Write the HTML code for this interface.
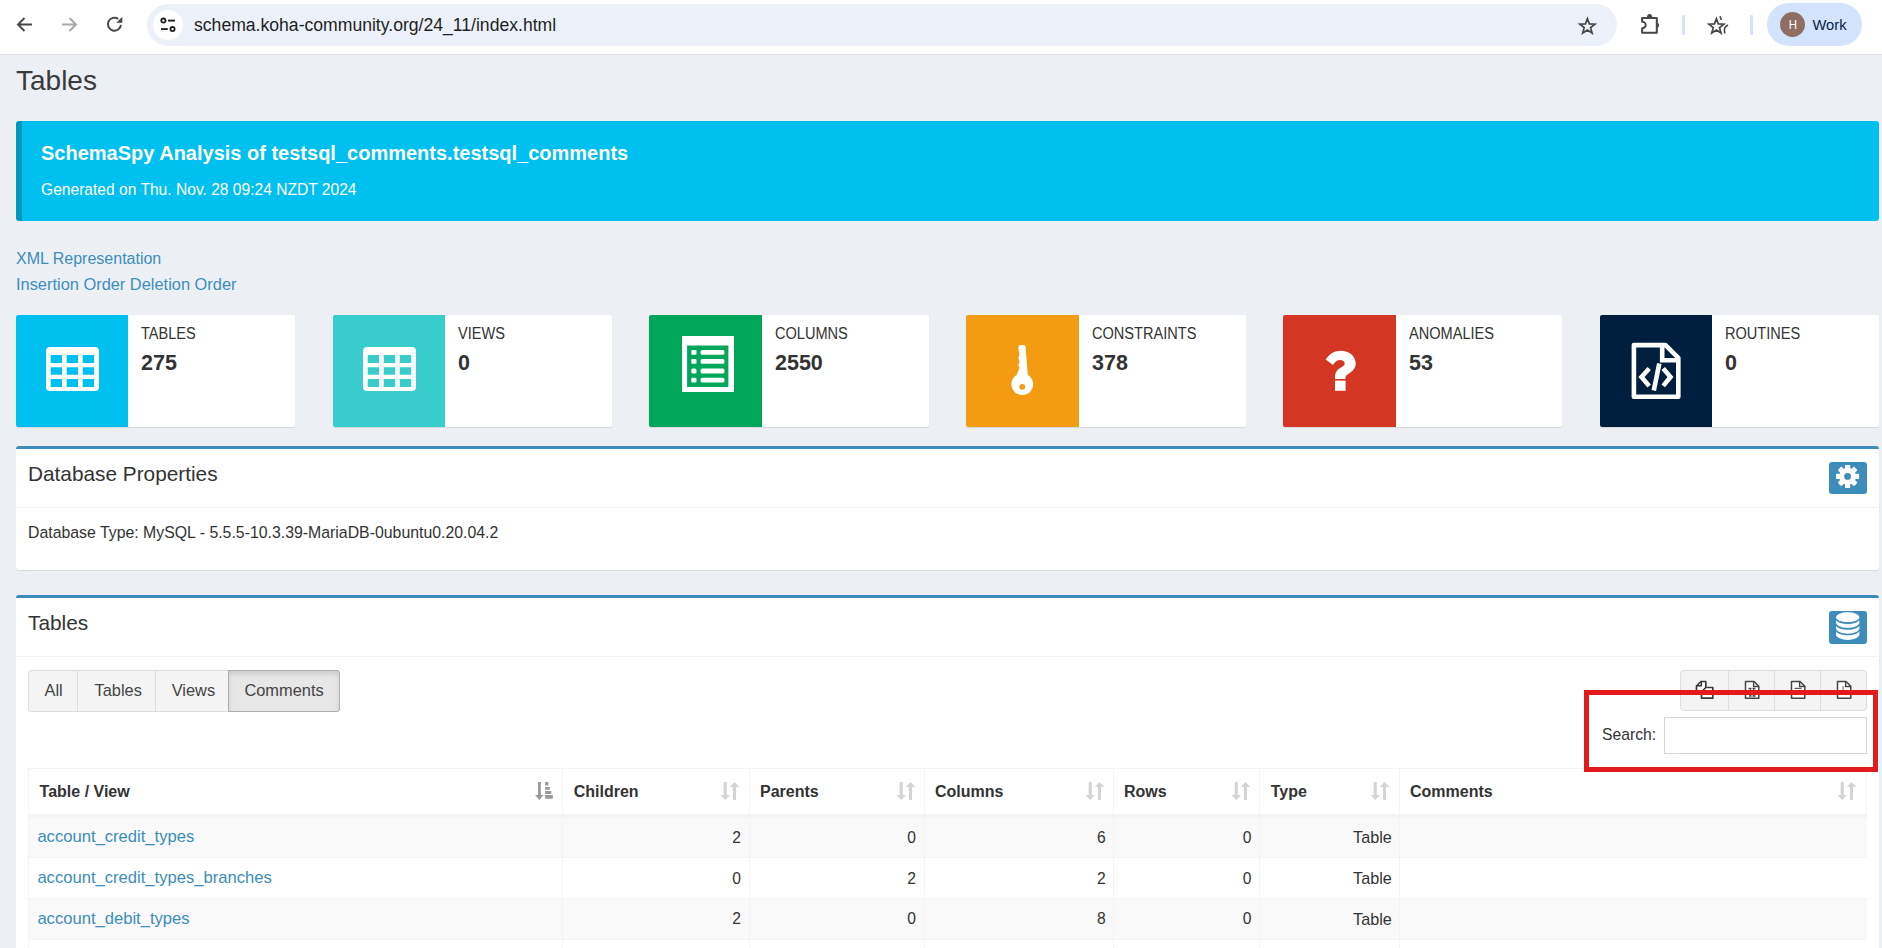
<!DOCTYPE html>
<html><head><meta charset="utf-8">
<style>
*{box-sizing:border-box;margin:0;padding:0}
html,body{width:1882px;height:948px;overflow:hidden}
body{background:#ecf0f5;font-family:"Liberation Sans",sans-serif;color:#333;position:relative}
.a{position:absolute}
.t{position:absolute;line-height:1;white-space:nowrap}
#toolbar{left:0;top:0;width:1882px;height:54px;background:#fff}
#tbline{left:0;top:54px;width:1882px;height:1px;background:#dcdee2}
#omni{left:147px;top:4px;width:1470px;height:42px;border-radius:21px;background:#ecf1f9}
#siteinfo{left:153px;top:10px;width:30px;height:30px;border-radius:15px;background:#fff}
#profile{left:1767px;top:3px;width:95px;height:43px;border-radius:21.5px;background:#d3e3fd}
#avatar{left:1780px;top:12px;width:25px;height:25px;border-radius:13px;background:#8d6e63;color:#fff;font-size:13.5px;text-align:center;line-height:25px}
.vsep{width:2.5px;height:19.5px;background:#d3e3fd;top:15px;border-radius:1px}

.callout{left:16px;top:121px;width:1863px;height:100px;background:#00c0ef;border-left:6px solid #0097bc;border-radius:3px}
.ibox{top:315px;height:112px;background:#fff;border-radius:2px;box-shadow:0 1px 1px rgba(0,0,0,.1)}
.ibox .ic{position:absolute;left:0;top:0;height:112px;border-radius:2px 0 0 2px}
.ibox .lab{position:absolute;left:125px;transform:scaleX(.91);transform-origin:0 0;font-size:16px;line-height:1;white-space:nowrap;color:#333}
.ibox .num{position:absolute;left:125px;font-size:21.5px;font-weight:bold;line-height:1;color:#333}
.panel{left:16px;width:1863px;background:#fff;border-top:3px solid #3c8dbc;border-radius:3px;box-shadow:0 1px 1px rgba(0,0,0,.1)}
.btn-tool{width:38px;height:32px;background:#3c8dbc;border-radius:3px}
.link{color:#3c8dbc}
</style></head><body>

<!-- Chrome toolbar -->
<div id="toolbar" class="a"></div>
<div id="tbline" class="a"></div>
<svg class="a" style="left:15px;top:15px" width="19" height="19" viewBox="0 0 19 19"><path d="M17 9.5H4M9.5 3L3 9.5 9.5 16" fill="none" stroke="#474747" stroke-width="2"/></svg>
<svg class="a" style="left:60px;top:15px" width="19" height="19" viewBox="0 0 19 19"><path d="M2 9.5H15M9.5 3L16 9.5 9.5 16" fill="none" stroke="#a8a8a8" stroke-width="2"/></svg>
<svg class="a" style="left:100px;top:10px" width="28" height="28" viewBox="0 0 28 28"><path d="M20.9 14.8A6.5 6.5 0 1 1 18.2 8.9" fill="none" stroke="#474747" stroke-width="2"/><path d="M22.3 6.8V12.8H16.3Z" fill="#474747"/></svg>
<div id="omni" class="a"></div>
<div id="siteinfo" class="a"></div>
<svg class="a" style="left:155px;top:12px" width="26" height="26" viewBox="0 0 26 26"><circle cx="8.4" cy="8.6" r="2.1" fill="none" stroke="#1f1f1f" stroke-width="1.8"/><path d="M13 8.6H20" stroke="#1f1f1f" stroke-width="1.9"/><circle cx="17.5" cy="17.1" r="2.1" fill="none" stroke="#1f1f1f" stroke-width="1.8"/><path d="M6 17.1H12.8" stroke="#1f1f1f" stroke-width="1.9"/></svg>
<div class="t" style="left:194px;top:17px;font-size:17.6px;color:#1f1f1f">schema.koha-community.org/24_11/index.html</div>
<svg class="a" style="left:1574px;top:12px" width="26" height="26" viewBox="0 0 26 26"><path d="M13.40 6.60 L15.37 11.88 L21.01 12.13 L16.60 15.64 L18.10 21.07 L13.40 17.96 L8.70 21.07 L10.20 15.64 L5.79 12.13 L11.43 11.88Z" fill="none" stroke="#474747" stroke-width="1.7" stroke-linejoin="miter" stroke-miterlimit="4"/></svg>
<svg class="a" style="left:1638px;top:12px" width="26" height="26" viewBox="0 0 26 26"><path d="M4.1 6.1H18.8V20.7H4.1V16.3A3.3 3 0 0 0 4.1 9.7Z" fill="none" stroke="#474747" stroke-width="2" stroke-linejoin="round"/><path d="M8.9 6.1A2.7 4 0 0 1 14.3 6.1Z" fill="#474747"/><path d="M18.3 10.6A2.7 2.7 0 0 1 18.3 16Z" fill="#474747"/></svg>
<div class="a vsep" style="left:1682px"></div>
<svg class="a" style="left:1704px;top:12px" width="28" height="26" viewBox="0 0 28 26"><path d="M12.40 6.70 L14.35 11.92 L19.91 12.16 L15.56 15.63 L17.04 20.99 L12.40 17.92 L7.76 20.99 L9.24 15.63 L4.89 12.16 L10.45 11.92Z" fill="none" stroke="#474747" stroke-width="1.7" stroke-linejoin="miter" stroke-miterlimit="4"/><path d="M16 4.3L17.4 8M24 13C21 14.5 19.6 16 20.8 21.5" fill="none" stroke="#474747" stroke-width="1.6"/></svg>
<div class="a vsep" style="left:1750px"></div>
<div id="profile" class="a"></div>
<div id="avatar" class="a"><span style="display:inline-block;transform:scaleX(.85)">H</span></div>
<div class="t" style="left:1812.5px;top:18px;font-size:14.7px;color:#041e49">Work</div>

<!-- Page header -->
<div class="t" style="left:16px;top:67px;font-size:28px;color:#3a3a3a">Tables</div>

<!-- Callout -->
<div class="callout a"></div>
<div class="t" style="left:41px;top:142.8px;font-size:20px;font-weight:bold;color:#fff">SchemaSpy Analysis of testsql_comments.testsql_comments</div>
<div class="t" style="left:41px;top:182px;font-size:15.6px;color:#fff">Generated on Thu. Nov. 28 09:24 NZDT 2024</div>

<div class="t link" style="left:16px;top:251px;font-size:16px">XML Representation</div>
<div class="t link" style="left:16px;top:275.7px;font-size:16.4px">Insertion Order Deletion Order</div>

<!-- Info boxes -->
<div class="ibox a" style="left:16px;width:279px"><div class="ic" style="width:112px;background:#00c0ef"><svg class="a" style="left:29.6px;top:31.9px" width="53" height="44" viewBox="0 0 53 44"><path fill="#fff" fill-rule="evenodd" d="M4 0H49A4 4 0 0 1 53 4V40A4 4 0 0 1 49 44H4A4 4 0 0 1 0 40V4A4 4 0 0 1 4 0Z M4.7 8V16H16V8Z M20.7 8V16H32.1V8Z M36.7 8V16H48.1V8Z M4.7 20.2V27.8H16V20.2Z M20.7 20.2V27.8H32.1V20.2Z M36.7 20.2V27.8H48.1V20.2Z M4.7 32V40.1H16V32Z M20.7 32V40.1H32.1V32Z M36.7 32V40.1H48.1V32Z"/></svg></div><div class="lab" style="top:10.5px;left:125px">TABLES</div><div class="num" style="top:37.6px;left:125px">275</div></div>
<div class="ibox a" style="left:333px;width:279px"><div class="ic" style="width:112px;background:#39cccc"><svg class="a" style="left:29.6px;top:31.9px" width="53" height="44" viewBox="0 0 53 44"><path fill="#fff" fill-rule="evenodd" d="M4 0H49A4 4 0 0 1 53 4V40A4 4 0 0 1 49 44H4A4 4 0 0 1 0 40V4A4 4 0 0 1 4 0Z M4.7 8V16H16V8Z M20.7 8V16H32.1V8Z M36.7 8V16H48.1V8Z M4.7 20.2V27.8H16V20.2Z M20.7 20.2V27.8H32.1V20.2Z M36.7 20.2V27.8H48.1V20.2Z M4.7 32V40.1H16V32Z M20.7 32V40.1H32.1V32Z M36.7 32V40.1H48.1V32Z"/></svg></div><div class="lab" style="top:10.5px;left:125px">VIEWS</div><div class="num" style="top:37.6px;left:125px">0</div></div>
<div class="ibox a" style="left:649px;width:280px"><div class="ic" style="width:113px;background:#00a65a"><svg class="a" style="left:33px;top:21.1px" width="52" height="56" viewBox="0 0 52 56"><path fill="#fff" fill-rule="evenodd" d="M0 0H52V56H0Z M5.1 9.5V50.9H46.4V9.5Z"/><rect x="9.3" y="14" width="5.2" height="4.8" rx="1" fill="#fff"/><rect x="18.6" y="14" width="23.8" height="4.8" rx="1.5" fill="#fff"/><rect x="9.3" y="23" width="5.2" height="4.8" rx="1" fill="#fff"/><rect x="18.6" y="23" width="23.8" height="4.8" rx="1.5" fill="#fff"/><rect x="9.3" y="32.4" width="5.2" height="5" rx="1.5" fill="#fff"/><rect x="18.6" y="32.4" width="23.8" height="5" rx="1.5" fill="#fff"/><rect x="9.3" y="41.8" width="5.2" height="4.8" rx="1" fill="#fff"/><rect x="18.6" y="41.8" width="23.8" height="4.8" rx="1.5" fill="#fff"/></svg></div><div class="lab" style="top:10.5px;left:126px">COLUMNS</div><div class="num" style="top:37.6px;left:126px">2550</div></div>
<div class="ibox a" style="left:966px;width:280px"><div class="ic" style="width:113px;background:#f39c12"><svg class="a" style="left:0.25px;top:0" width="112" height="112" viewBox="0 0 112 112"><path fill="#fff" fill-rule="evenodd" d="M52.45 32Q52.45 30 54.5 30H57.6Q59.6 30 59.6 32L61.75 59.7A10.9 10.9 0 1 1 50.75 59.7L53.2 53.8Q53.7 52.1 52.6 50.8Q52 49.6 53.2 48Q53.7 45.4 52.6 44Q52 42.85 53 41Q53.7 36.5 52.45 35.25Z M56.25 68.9A2.9 2.9 0 1 0 56.25 74.7 2.9 2.9 0 1 0 56.25 68.9Z"/></svg></div><div class="lab" style="top:10.5px;left:126px">CONSTRAINTS</div><div class="num" style="top:37.6px;left:126px">378</div></div>
<div class="ibox a" style="left:1283px;width:279px"><div class="ic" style="width:113px;background:#d33724"><svg class="a" style="left:17px;top:15px" width="80" height="80" viewBox="0 0 80 80"><path fill="#fff" d="M25.7 29.6C29 24 34.5 20.7 41 20.7C49 20.7 55.7 26 55.7 33.5C55.7 39 51.5 42 47.5 44.5C46 45.5 45.4 46.5 45.4 48V49H35V47C35 41.5 38 39 42 37C43.8 36 44.7 34.8 44.7 33.5C44.7 31.5 42.8 30 40 30C37 30 35 31.5 33 35Z"/><rect x="35" y="50.6" width="10.6" height="10.2" fill="#fff"/></svg></div><div class="lab" style="top:10.5px;left:126px">ANOMALIES</div><div class="num" style="top:37.6px;left:126px">53</div></div>
<div class="ibox a" style="left:1600px;width:279px"><div class="ic" style="width:112px;background:#001f3f"><svg class="a" style="left:16px;top:15px" width="80" height="80" viewBox="0 0 80 80"><path fill="none" stroke="#fff" stroke-width="4.6" stroke-linejoin="round" d="M17.9 15.1H49.5L62.3 27.9V66.7H17.9Z"/><path fill="none" stroke="#fff" stroke-width="4.6" d="M46.2 15.1V30.2H62.3"/><path fill="none" stroke="#fff" stroke-width="4.6" stroke-linecap="butt" d="M33.2 38.5L25.5 47 33.2 55.9M47.2 38.5L54.5 47 47.2 55.9M43.3 33.5L37.8 60.5"/></svg></div><div class="lab" style="top:10.5px;left:125px">ROUTINES</div><div class="num" style="top:37.6px;left:125px">0</div></div>

<!-- PANELS -->
<div class="panel a" style="top:446px;height:124px"></div>
<div class="t" style="left:28px;top:463.7px;font-size:20.8px;">Database Properties</div>
<div class="a" style="left:16px;top:507px;width:1862px;height:1px;background:#f4f4f4"></div>
<svg class="a" style="left:1829px;top:462px" width="38" height="32" viewBox="0 0 38 32"><rect width="38" height="32" rx="3" fill="#3c8dbc"/><g transform="translate(18.6,14.4)" fill="#fff"><circle r="8.4"/><rect x="-2.6" y="-11.5" width="5.2" height="6" rx="0.3" transform="rotate(0)"/><rect x="-2.6" y="-11.5" width="5.2" height="6" rx="1.2" transform="rotate(45)"/><rect x="-2.6" y="-11.5" width="5.2" height="6" rx="0.3" transform="rotate(90)"/><rect x="-2.6" y="-11.5" width="5.2" height="6" rx="1.2" transform="rotate(135)"/><rect x="-2.6" y="-11.5" width="5.2" height="6" rx="0.3" transform="rotate(180)"/><rect x="-2.6" y="-11.5" width="5.2" height="6" rx="1.2" transform="rotate(225)"/><rect x="-2.6" y="-11.5" width="5.2" height="6" rx="0.3" transform="rotate(270)"/><rect x="-2.6" y="-11.5" width="5.2" height="6" rx="1.2" transform="rotate(315)"/><circle r="3.4" fill="#3c8dbc"/></g></svg>
<div class="t" style="left:28px;top:524.88px;font-size:15.85px;">Database Type: MySQL - 5.5.5-10.3.39-MariaDB-0ubuntu0.20.04.2</div>
<div class="panel a" style="top:595px;height:400px"></div>
<div class="t" style="left:28px;top:613px;font-size:20.8px;">Tables</div>
<div class="a" style="left:16px;top:656px;width:1862px;height:1px;background:#f4f4f4"></div>
<svg class="a" style="left:1829px;top:611px" width="38" height="33" viewBox="0 0 38 33"><rect width="38" height="33" rx="3" fill="#3c8dbc"/><g fill="#fff"><ellipse cx="18.7" cy="6.3" rx="11.7" ry="5"/><path d="M7 9.2C9 11.5 13.5 12.9 18.7 12.9S28.4 11.5 30.4 9.2V12.2C29 14.9 24.5 16.9 18.7 16.9S8.4 14.9 7 12.2Z"/><path d="M7 15C9 17.3 13.5 18.7 18.7 18.7S28.4 17.3 30.4 15V18C29 20.7 24.5 22.7 18.7 22.7S8.4 20.7 7 18Z"/><path d="M7 20.6C9 22.9 13.5 24.3 18.7 24.3S28.4 22.9 30.4 20.6V24.3C29 27 24.5 28.9 18.7 28.9S8.4 27 7 24.3Z"/></g></svg>
<div class="a" style="left:28px;top:670px;width:50px;height:42px;border:1px solid #ddd;border-radius:3px 0 0 3px;background:#f4f4f4"></div>
<div class="a" style="left:77px;top:670px;width:79px;height:42px;border:1px solid #ddd;background:#f4f4f4"></div>
<div class="a" style="left:155px;top:670px;width:74px;height:42px;border:1px solid #ddd;background:#f4f4f4"></div>
<div class="a" style="left:228px;top:670px;width:112px;height:42px;border:1px solid #adadad;border-radius:0 3px 3px 0;background:#e7e7e7;box-shadow:inset 0 3px 5px rgba(0,0,0,.125)"></div>
<div class="t" style="left:44.5px;top:682.12px;font-size:16.4px;color:#444">All</div>
<div class="t" style="left:94.5px;top:682.12px;font-size:16.4px;color:#444">Tables</div>
<div class="t" style="left:171.7px;top:682.12px;font-size:16.4px;color:#444">Views</div>
<div class="t" style="left:244.4px;top:682.12px;font-size:16.4px;color:#444">Comments</div>
<div class="a" style="left:1680px;top:670px;width:186.5px;height:41px;border:1px solid #ddd;border-radius:4px;background:#f4f4f4"></div>
<div class="a" style="left:1728px;top:671px;width:1px;height:39px;background:#ddd"></div>
<div class="a" style="left:1774px;top:671px;width:1px;height:39px;background:#ddd"></div>
<div class="a" style="left:1820px;top:671px;width:1px;height:39px;background:#ddd"></div>
<svg class="a" style="left:1695px;top:680px" width="20" height="20" viewBox="0 0 20 20"><path d="M1.5 6L6 1.5H10.8V13.5H1.5Z" fill="#fff" stroke="#3a3a3a" stroke-width="1.7" stroke-linejoin="round"/><path d="M6.3 1.5V5.8H1.5" fill="none" stroke="#3a3a3a" stroke-width="1.5"/><path d="M6.5 12L10.8 7.5H17.8V18.2H6.5Z" fill="#fff" stroke="#3a3a3a" stroke-width="1.7" stroke-linejoin="round"/></svg>
<svg class="a" style="left:1744px;top:680px" width="17" height="20" viewBox="0 0 17 20"><path d="M1.5 1.5H10L14.8 6.3V18.2H1.5Z" fill="#fff" stroke="#444" stroke-width="1.5" stroke-linejoin="round"/><path d="M9.6 1.5V6.5H14.8" fill="none" stroke="#444" stroke-width="1.4"/><path d="M4.5 8.5H7.5M8.5 8.5H11.5M5 16H7.5M8.5 16H11.5" stroke="#444" stroke-width="1.3"/><path d="M6 8.5L10 16M10 8.5L6 16" stroke="#444" stroke-width="1"/></svg>
<svg class="a" style="left:1789.5px;top:680px" width="17" height="20" viewBox="0 0 17 20"><path d="M1.5 1.5H10L14.8 6.3V18.2H1.5Z" fill="#fff" stroke="#444" stroke-width="1.5" stroke-linejoin="round"/><path d="M9.6 1.5V6.5H14.8" fill="none" stroke="#444" stroke-width="1.4"/><path d="M4.5 8.4H11.5" stroke="#555" stroke-width="1.3"/></svg>
<svg class="a" style="left:1835.5px;top:680px" width="17" height="20" viewBox="0 0 17 20"><path d="M1.5 1.5H10L14.8 6.3V18.2H1.5Z" fill="#fff" stroke="#444" stroke-width="1.5" stroke-linejoin="round"/><path d="M9.6 1.5V6.5H14.8" fill="none" stroke="#444" stroke-width="1.4"/><path d="M7.1 6V10" stroke="#666" stroke-width="1"/></svg>
<div class="t" style="left:1602px;top:726.71px;font-size:15.7px;">Search:</div>
<div class="a" style="left:1664px;top:717px;width:203px;height:37px;border:1px solid #d2d6de;background:#fff"></div>

<!-- TABLE -->
<div class="a" style="left:28px;top:768px;width:1839px;height:200px;background:#fff;border:1px solid #f4f4f4"></div>
<div class="a" style="left:29px;top:816.5px;width:1838px;height:40.75px;background:#f9f9f9;border-top:1px solid #f4f4f4"></div>
<div class="a" style="left:29px;top:857.25px;width:1838px;height:40.75px;background:#fff;border-top:1px solid #f4f4f4"></div>
<div class="a" style="left:29px;top:898.0px;width:1838px;height:40.75px;background:#f9f9f9;border-top:1px solid #f4f4f4"></div>
<div class="a" style="left:29px;top:938.75px;width:1838px;height:40.75px;background:#fff;border-top:1px solid #f4f4f4"></div>
<div class="a" style="left:29px;top:814px;width:1838px;height:2.5px;background:#f4f4f4"></div>
<div class="a" style="left:562px;top:768px;width:1px;height:200px;background:#f4f4f4"></div>
<div class="a" style="left:749px;top:768px;width:1px;height:200px;background:#f4f4f4"></div>
<div class="a" style="left:924px;top:768px;width:1px;height:200px;background:#f4f4f4"></div>
<div class="a" style="left:1113px;top:768px;width:1px;height:200px;background:#f4f4f4"></div>
<div class="a" style="left:1259px;top:768px;width:1px;height:200px;background:#f4f4f4"></div>
<div class="a" style="left:1399px;top:768px;width:1px;height:200px;background:#f4f4f4"></div>
<div class="t" style="left:39.6px;top:784.16px;font-size:16px;font-weight:bold">Table / View</div>
<div class="t" style="left:573.7px;top:784.16px;font-size:16px;font-weight:bold">Children</div>
<div class="t" style="left:760px;top:784.16px;font-size:16px;font-weight:bold">Parents</div>
<div class="t" style="left:935px;top:784.16px;font-size:16px;font-weight:bold">Columns</div>
<div class="t" style="left:1124px;top:784.16px;font-size:16px;font-weight:bold">Rows</div>
<div class="t" style="left:1270.7px;top:784.16px;font-size:16px;font-weight:bold">Type</div>
<div class="t" style="left:1410px;top:784.16px;font-size:16px;font-weight:bold">Comments</div>
<svg class="a" style="left:721.2px;top:781px" width="18" height="20" viewBox="0 0 18 20"><path fill="#d4d4d4" d="M2.7 1H5.8V14H9L4.25 19 -0.5 14H2.7Z M11.9 19H15V6H18.2L13.45 1 8.7 6H11.9Z"/></svg>
<svg class="a" style="left:896.5px;top:781px" width="18" height="20" viewBox="0 0 18 20"><path fill="#d4d4d4" d="M2.7 1H5.8V14H9L4.25 19 -0.5 14H2.7Z M11.9 19H15V6H18.2L13.45 1 8.7 6H11.9Z"/></svg>
<svg class="a" style="left:1085.5px;top:781px" width="18" height="20" viewBox="0 0 18 20"><path fill="#d4d4d4" d="M2.7 1H5.8V14H9L4.25 19 -0.5 14H2.7Z M11.9 19H15V6H18.2L13.45 1 8.7 6H11.9Z"/></svg>
<svg class="a" style="left:1231.5px;top:781px" width="18" height="20" viewBox="0 0 18 20"><path fill="#d4d4d4" d="M2.7 1H5.8V14H9L4.25 19 -0.5 14H2.7Z M11.9 19H15V6H18.2L13.45 1 8.7 6H11.9Z"/></svg>
<svg class="a" style="left:1371.0px;top:781px" width="18" height="20" viewBox="0 0 18 20"><path fill="#d4d4d4" d="M2.7 1H5.8V14H9L4.25 19 -0.5 14H2.7Z M11.9 19H15V6H18.2L13.45 1 8.7 6H11.9Z"/></svg>
<svg class="a" style="left:1837.5px;top:781px" width="18" height="20" viewBox="0 0 18 20"><path fill="#d4d4d4" d="M2.7 1H5.8V14H9L4.25 19 -0.5 14H2.7Z M11.9 19H15V6H18.2L13.45 1 8.7 6H11.9Z"/></svg>
<svg class="a" style="left:534px;top:781px" width="20" height="20" viewBox="0 0 20 20"><path fill="#999" d="M4 1H6.8V14H9.5L5.4 19 1.1 14H4Z M11.1 1H14.4V4.6H11.1Z M11.1 5.9H15.8V8.7H11.1Z M11.1 10H17.3V13H11.1Z M11.1 14H18.8V17.7H11.1Z"/></svg>
<div class="t" style="left:37.4px;top:829.05px;font-size:16.6px;color:#3c8dbc">account_credit_types</div>
<div class="t" style="right:1141px;top:829.90px;font-size:15.6px;">2</div>
<div class="t" style="right:966px;top:829.90px;font-size:15.6px;">0</div>
<div class="t" style="right:776.3px;top:829.90px;font-size:15.6px;">6</div>
<div class="t" style="right:630.5px;top:829.90px;font-size:15.6px;">0</div>
<div class="t" style="right:490.20000000000005px;top:829.39px;font-size:16.2px;">Table</div>
<div class="t" style="left:37.4px;top:869.80px;font-size:16.6px;color:#3c8dbc">account_credit_types_branches</div>
<div class="t" style="right:1141px;top:870.65px;font-size:15.6px;">0</div>
<div class="t" style="right:966px;top:870.65px;font-size:15.6px;">2</div>
<div class="t" style="right:776.3px;top:870.65px;font-size:15.6px;">2</div>
<div class="t" style="right:630.5px;top:870.65px;font-size:15.6px;">0</div>
<div class="t" style="right:490.20000000000005px;top:870.14px;font-size:16.2px;">Table</div>
<div class="t" style="left:37.4px;top:910.55px;font-size:16.6px;color:#3c8dbc">account_debit_types</div>
<div class="t" style="right:1141px;top:911.40px;font-size:15.6px;">2</div>
<div class="t" style="right:966px;top:911.40px;font-size:15.6px;">0</div>
<div class="t" style="right:776.3px;top:911.40px;font-size:15.6px;">8</div>
<div class="t" style="right:630.5px;top:911.40px;font-size:15.6px;">0</div>
<div class="t" style="right:490.20000000000005px;top:910.89px;font-size:16.2px;">Table</div>
<!-- RED -->
<div class="a" style="left:1584px;top:690px;width:294px;height:82px;border:5px solid #e31a1c"></div>

</body></html>
